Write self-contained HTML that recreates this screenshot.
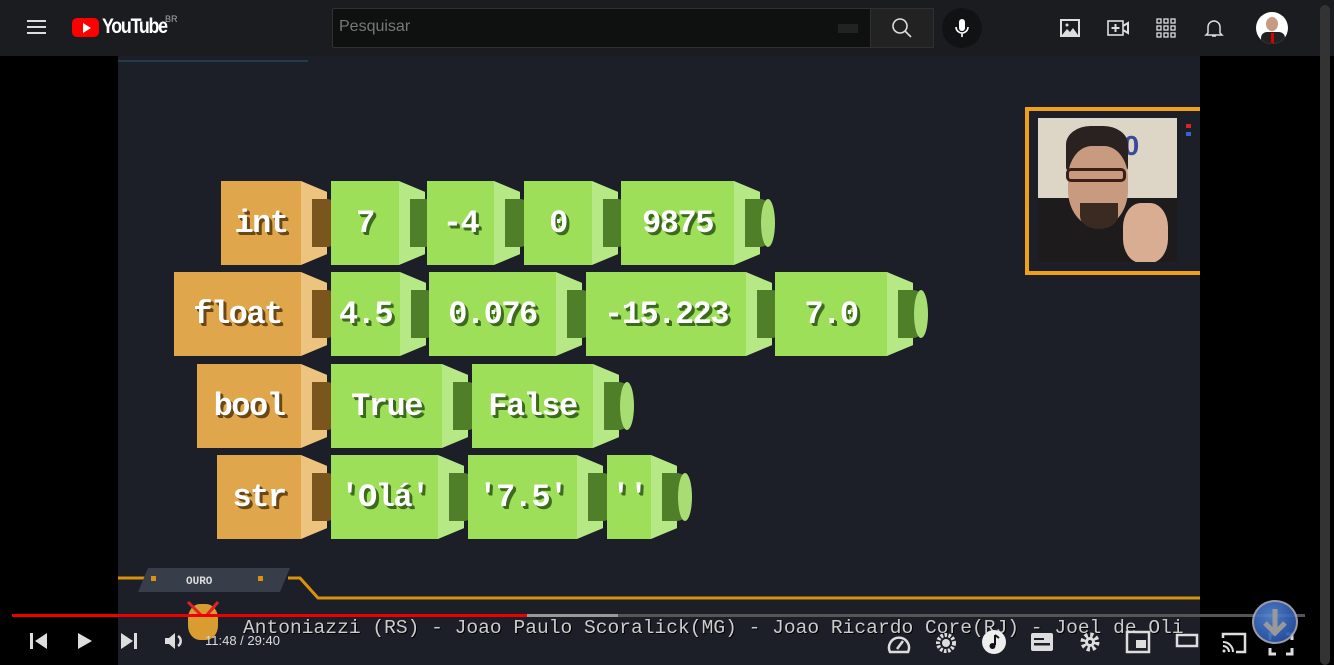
<!DOCTYPE html>
<html><head><meta charset="utf-8"><style>
*{margin:0;padding:0;box-sizing:border-box}
body{width:1334px;height:665px;background:#000;position:relative;overflow:hidden;font-family:"Liberation Sans",sans-serif}
#top{position:absolute;left:0;top:0;width:1334px;height:56px;background:#1b1c20}
#vid{position:absolute;left:118px;top:56px;width:1082px;height:609px;background:#1c1e28;overflow:hidden}
.f{position:absolute;z-index:3;height:84px;display:flex;align-items:center;justify-content:center;font-family:"Liberation Mono",monospace;font-weight:bold;font-size:32px;color:#fff;letter-spacing:-1.5px}
.g{background:#9ddf58;text-shadow:2px 2px 0 #3c6b1e,3px 3px 0 #3c6b1e}
.o{background:#e0a64c;text-shadow:2px 2px 0 #6b4716,3px 3px 0 #6b4716}
.bv{position:absolute;z-index:1;height:84px;width:26px;clip-path:polygon(0 0,100% 13%,100% 87%,0 100%)}
.bg{background:#b6e985}.bo{background:#edc380}
.c{position:absolute;z-index:2;width:30px;height:48px;border-radius:0 50% 50% 0/0 50% 50% 0}
.cg{background:#4f7f28}.co{background:#7a561e}
.cap{position:absolute;right:0;top:0;width:14px;height:48px;border-radius:50%;background:#a7dd72}
.ic{position:absolute}
</style></head><body>
<div id="top">
 <div style="position:absolute;left:27px;top:20px;width:19px;height:2px;background:#ddd;box-shadow:0 6px 0 #ddd,0 12px 0 #ddd"></div>
 <div style="position:absolute;left:72px;top:18px;width:27px;height:19px;background:#f00;border-radius:5px"></div>
 <div style="position:absolute;left:83px;top:23px;width:0;height:0;border-left:8px solid #fff;border-top:5px solid transparent;border-bottom:5px solid transparent"></div>
 <div style="position:absolute;left:102px;top:15px;color:#fff;font-size:21px;font-weight:bold;letter-spacing:-1.5px;transform:scaleX(.85);transform-origin:left">YouTube</div>
 <div style="position:absolute;left:165px;top:14px;color:#aaa;font-size:9px">BR</div>
 <div style="position:absolute;left:332px;top:8px;width:539px;height:40px;background:#0f1010;border:1px solid #303030;border-radius:2px 0 0 2px"></div>
 <div style="position:absolute;left:339px;top:18px;color:#777;font-size:16px">Pesquisar</div>
 <div style="position:absolute;left:838px;top:24px;width:20px;height:9px;background:#222"></div>
 <div style="position:absolute;left:870px;top:8px;width:64px;height:40px;background:#222;border:1px solid #303030"></div>
 <svg class="ic" style="left:890px;top:16px" width="24" height="24"><circle cx="10" cy="10" r="7" fill="none" stroke="#ddd" stroke-width="1.6"/><path d="M15 15l6 6" stroke="#ddd" stroke-width="1.6"/></svg>
 <div style="position:absolute;left:942px;top:8px;width:40px;height:40px;background:#111214;border-radius:50%"></div>
 <svg class="ic" style="left:950px;top:16px" width="24" height="24"><rect x="9" y="3" width="6" height="12" rx="3" fill="#fff"/><path d="M6 11a6 6 0 0 0 12 0M12 17v4" stroke="#fff" stroke-width="1.6" fill="none"/></svg>
 <svg class="ic" style="left:1058px;top:16px" width="24" height="24"><rect x="2" y="3" width="20" height="18" fill="#ddd"/><rect x="4" y="5" width="16" height="14" fill="#1b1c20"/><path d="M4 19l5-6 3 3 3-4 5 7z" fill="#ddd"/><circle cx="9" cy="9" r="1.5" fill="#ddd"/></svg>
 <svg class="ic" style="left:1106px;top:16px" width="24" height="24"><rect x="2" y="5" width="15" height="14" fill="none" stroke="#ddd" stroke-width="1.6"/><path d="M17 10l5-3v10l-5-3M9.5 8v8M5.5 12h8" stroke="#ddd" stroke-width="2" fill="none"/></svg>
 <svg class="ic" style="left:1154px;top:16px" width="24" height="24" fill="none" stroke="#ddd" stroke-width="1.3"><rect x="3" y="3" width="4" height="4"/><rect x="10" y="3" width="4" height="4"/><rect x="17" y="3" width="4" height="4"/><rect x="3" y="10" width="4" height="4"/><rect x="10" y="10" width="4" height="4"/><rect x="17" y="10" width="4" height="4"/><rect x="3" y="17" width="4" height="4"/><rect x="10" y="17" width="4" height="4"/><rect x="17" y="17" width="4" height="4"/></svg>
 <svg class="ic" style="left:1202px;top:16px" width="24" height="24"><path d="M6 17V11a6 6 0 0 1 12 0v6l2 2H4z M10 20h4" stroke="#ddd" stroke-width="1.5" fill="none"/></svg>
 <div style="position:absolute;left:1256px;top:12px;width:32px;height:32px;border-radius:50%;background:#fff;overflow:hidden"><div style="position:absolute;left:10px;top:5px;width:12px;height:14px;border-radius:50%;background:#c89a80"></div><div style="position:absolute;left:5px;top:20px;width:24px;height:14px;background:#222;border-radius:6px 6px 0 0"></div><div style="position:absolute;left:15px;top:21px;width:3px;height:10px;background:#d00"></div></div>
</div>
<div style="position:absolute;left:1320px;top:5px;width:10px;height:660px;background:#333;border-radius:5px"></div>
<div id="vid">
 <div style="position:absolute;left:0;top:4px;width:190px;height:2px;background:#1e3c4c"></div>
 <div style="position:absolute;left:907px;top:51px;width:180px;height:168px;border:4px solid #f0a018;border-right:none"></div>
 <div style="position:absolute;left:920px;top:62px;width:139px;height:144px;background:#ddd6c6;overflow:hidden">
  <div style="position:absolute;left:70px;top:12px;width:60px;height:40px;color:#3a4a9a;font:bold 28px 'Liberation Sans';">30</div>
  <div style="position:absolute;left:0;top:80px;width:139px;height:70px;background:#1d1b1c"></div>
  <div style="position:absolute;left:28px;top:8px;width:62px;height:46px;background:#2a2220;border-radius:40% 40% 10% 10%"></div>
  <div style="position:absolute;left:30px;top:28px;width:60px;height:80px;background:#c89a80;border-radius:40% 40% 45% 45%"></div>
  <div style="position:absolute;left:28px;top:50px;width:60px;height:14px;border:3px solid #3a1e18;border-radius:5px"></div>
  <div style="position:absolute;left:42px;top:85px;width:38px;height:26px;background:#3a2a22;border-radius:0 0 50% 50%"></div>
  <div style="position:absolute;left:85px;top:85px;width:45px;height:60px;background:#d8ad92;border-radius:40%"></div>
 </div>
 <div style="position:absolute;left:1068px;top:68px;width:5px;height:4px;background:#d22"></div>
 <div style="position:absolute;left:1068px;top:76px;width:5px;height:4px;background:#36c"></div>
 <svg style="position:absolute;left:0;top:510px" width="1082" height="40"><path d="M0 12H140M170 12H182L200 32H1082" stroke="#d8920e" stroke-width="3" fill="none"/><polygon points="30,2 172,2 162,26 20,26" fill="#383d4a"/><rect x="33" y="10" width="5" height="5" fill="#d8920e"/><rect x="140" y="10" width="5" height="5" fill="#d8920e"/><text x="68" y="18" fill="#ddd" font-family="Liberation Mono" font-weight="bold" font-size="11">OURO</text></svg>
 <div style="position:absolute;left:125px;top:561px;white-space:nowrap;font-family:'Liberation Mono',monospace;font-size:19.6px;color:#ccc;text-shadow:1px 1px 0 #000">Antoniazzi (RS) - Joao Paulo Scoralick(MG) - Joao Ricardo Core(RJ) - Joel de Oli</div>
 <div style="position:absolute;left:70px;top:548px;width:30px;height:36px;background:#d99c30;border-radius:40%"></div>
 <svg style="position:absolute;left:66px;top:544px" width="40" height="20"><path d="M4 2l14 14M34 2L22 16" stroke="#d22" stroke-width="3"/></svg>
</div>
<div class="f o" style="left:221px;top:181px;width:80px">int</div><div class="bv bo" style="left:301px;top:181px"></div><div class="c co" style="left:312px;top:199px"></div>
<div class="f g" style="left:331px;top:181px;width:68px">7</div><div class="bv bg" style="left:399px;top:181px"></div><div class="c cg" style="left:410px;top:199px"></div>
<div class="f g" style="left:427px;top:181px;width:67px">-4</div><div class="bv bg" style="left:494px;top:181px"></div><div class="c cg" style="left:505px;top:199px"></div>
<div class="f g" style="left:524px;top:181px;width:68px">0</div><div class="bv bg" style="left:592px;top:181px"></div><div class="c cg" style="left:603px;top:199px"></div>
<div class="f g" style="left:621px;top:181px;width:113px">9875</div><div class="bv bg" style="left:734px;top:181px"></div><div class="c cg" style="left:745px;top:199px"><div class="cap"></div></div>

<div class="f o" style="left:174px;top:272px;width:127px">float</div><div class="bv bo" style="left:301px;top:272px"></div><div class="c co" style="left:312px;top:290px"></div>
<div class="f g" style="left:331px;top:272px;width:69px">4.5</div><div class="bv bg" style="left:400px;top:272px"></div><div class="c cg" style="left:411px;top:290px"></div>
<div class="f g" style="left:429px;top:272px;width:127px">0.076</div><div class="bv bg" style="left:556px;top:272px"></div><div class="c cg" style="left:567px;top:290px"></div>
<div class="f g" style="left:586px;top:272px;width:160px">-15.223</div><div class="bv bg" style="left:746px;top:272px"></div><div class="c cg" style="left:757px;top:290px"></div>
<div class="f g" style="left:775px;top:272px;width:112px">7.0</div><div class="bv bg" style="left:887px;top:272px"></div><div class="c cg" style="left:898px;top:290px"><div class="cap"></div></div>

<div class="f o" style="left:197px;top:364px;width:104px">bool</div><div class="bv bo" style="left:301px;top:364px"></div><div class="c co" style="left:312px;top:382px"></div>
<div class="f g" style="left:331px;top:364px;width:111px">True</div><div class="bv bg" style="left:442px;top:364px"></div><div class="c cg" style="left:453px;top:382px"></div>
<div class="f g" style="left:472px;top:364px;width:121px">False</div><div class="bv bg" style="left:593px;top:364px"></div><div class="c cg" style="left:604px;top:382px"><div class="cap"></div></div>

<div class="f o" style="left:217px;top:455px;width:84px">str</div><div class="bv bo" style="left:301px;top:455px"></div><div class="c co" style="left:312px;top:473px"></div>
<div class="f g" style="left:331px;top:455px;width:107px">'Olá'</div><div class="bv bg" style="left:438px;top:455px"></div><div class="c cg" style="left:449px;top:473px"></div>
<div class="f g" style="left:468px;top:455px;width:109px">'7.5'</div><div class="bv bg" style="left:577px;top:455px"></div><div class="c cg" style="left:588px;top:473px"></div>
<div class="f g" style="left:607px;top:455px;width:44px">''</div><div class="bv bg" style="left:651px;top:455px"></div><div class="c cg" style="left:662px;top:473px"><div class="cap"></div></div>
<div style="position:absolute;left:12px;top:614px;width:1293px;height:3px;background:#555"></div>
<div style="position:absolute;left:527px;top:614px;width:91px;height:3px;background:#999"></div>
<div style="position:absolute;left:12px;top:614px;width:515px;height:3px;background:#e00"></div>
<svg class="ic" style="left:28px;top:630px" width="22" height="22" fill="#ddd"><rect x="2" y="3" width="3" height="16"/><path d="M19 3v16L7 11z"/></svg>
<svg class="ic" style="left:74px;top:630px" width="22" height="22" fill="#ddd"><path d="M4 3v16l14-8z"/></svg>
<svg class="ic" style="left:118px;top:630px" width="22" height="22" fill="#ddd"><path d="M3 3v16l12-8z"/><rect x="16" y="3" width="3" height="16"/></svg>
<svg class="ic" style="left:163px;top:630px" width="24" height="22" fill="#ddd"><path d="M2 8h4l6-5v16l-6-5H2z"/><path d="M15 6a6 6 0 0 1 0 10" stroke="#ddd" stroke-width="2.5" fill="none"/></svg>
<div style="position:absolute;left:205px;top:633px;color:#ddd;font-size:13px">11:48 / 29:40</div>
<svg class="ic" style="left:885px;top:630px" width="28" height="26"><path d="M5 22a10 10 0 1 1 18 0z" stroke="#ddd" stroke-width="2.5" fill="none"/><path d="M12 19l6-8" stroke="#ddd" stroke-width="2.5"/></svg>
<svg class="ic" style="left:934px;top:630px" width="24" height="26"><circle cx="12" cy="13" r="8" fill="none" stroke="#ddd" stroke-width="4" stroke-dasharray="2.5 1.5"/><circle cx="12" cy="13" r="4" fill="#ddd"/></svg>
<svg class="ic" style="left:981px;top:629px" width="26" height="26"><circle cx="13" cy="13" r="12" fill="#eee"/><path d="M14 6v10" stroke="#111" stroke-width="2"/><circle cx="11.5" cy="17" r="3" fill="#111"/><path d="M14 6l4 3" stroke="#111" stroke-width="2"/></svg>
<svg class="ic" style="left:1030px;top:632px" width="24" height="20"><rect x="1" y="1" width="22" height="18" rx="2" fill="#ddd"/><rect x="4" y="11" width="16" height="2.5" fill="#1c1e28"/><rect x="4" y="6" width="10" height="2" fill="#1c1e28"/></svg>
<svg class="ic" style="left:1078px;top:630px" width="24" height="24"><circle cx="12" cy="12" r="7" fill="none" stroke="#ddd" stroke-width="5" stroke-dasharray="3 2.5"/><circle cx="12" cy="12" r="5" fill="#ddd"/><circle cx="12" cy="12" r="2" fill="#1c1e28"/></svg>
<svg class="ic" style="left:1125px;top:630px" width="26" height="24"><rect x="2" y="2" width="22" height="20" fill="none" stroke="#ddd" stroke-width="2.5"/><rect x="11" y="10" width="10" height="8" fill="#ddd"/></svg>
<svg class="ic" style="left:1175px;top:632px" width="24" height="18"><rect x="2" y="3" width="20" height="11" fill="none" stroke="#ddd" stroke-width="2.5"/></svg>
<svg class="ic" style="left:1220px;top:630px" width="28" height="26"><path d="M3 8V4h22v18h-9" stroke="#ddd" stroke-width="2.5" fill="none"/><path d="M3 12a10 10 0 0 1 10 10M3 16a6 6 0 0 1 6 6" stroke="#ddd" stroke-width="2" fill="none"/><circle cx="4" cy="21" r="1.5" fill="#ddd"/></svg>
<svg class="ic" style="left:1268px;top:632px" width="26" height="24" stroke="#ddd" stroke-width="3" fill="none"><path d="M2 8V2h6M18 2h6v6M24 16v6h-6M8 22H2v-6"/></svg>
<div style="position:absolute;left:1252px;top:600px;width:46px;height:44px;border-radius:50%;background:radial-gradient(circle at 40% 35%,#5a8ad8,#1a46a0);border:2px solid #aab;opacity:.9"></div>
<svg class="ic" style="left:1260px;top:606px" width="30" height="34"><path d="M15 3v24M5 17l10 10 10-10" stroke="#999" stroke-width="5" fill="none"/></svg>
</body></html>
